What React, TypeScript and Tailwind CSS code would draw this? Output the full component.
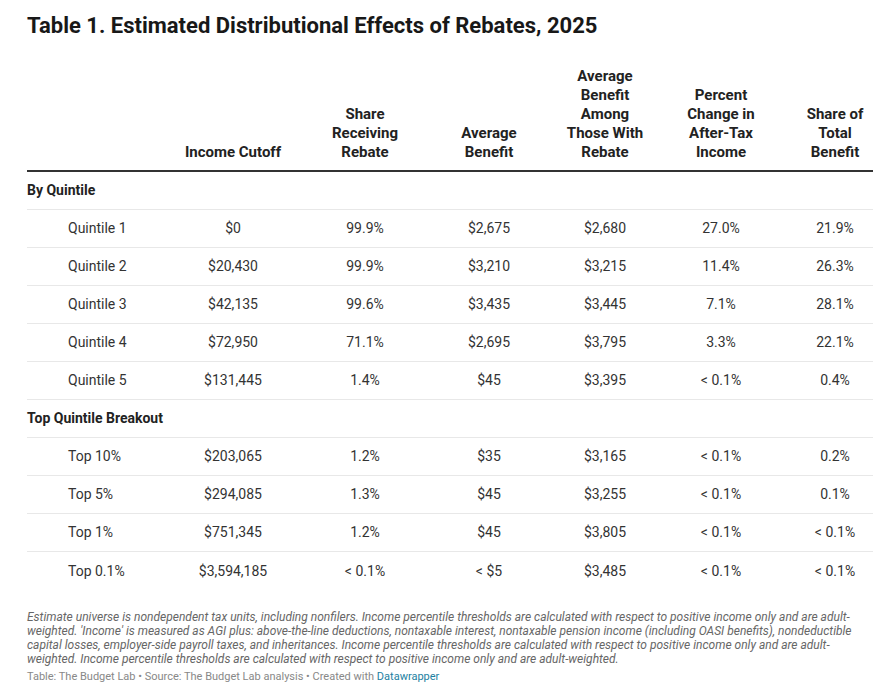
import React from 'react';

type Row = { label: string; cells: string[] };

const quintiles: Row[] = [
  { label: 'Quintile 1', cells: ['$0', '99.9%', '$2,675', '$2,680', '27.0%', '21.9%'] },
  { label: 'Quintile 2', cells: ['$20,430', '99.9%', '$3,210', '$3,215', '11.4%', '26.3%'] },
  { label: 'Quintile 3', cells: ['$42,135', '99.6%', '$3,435', '$3,445', '7.1%', '28.1%'] },
  { label: 'Quintile 4', cells: ['$72,950', '71.1%', '$2,695', '$3,795', '3.3%', '22.1%'] },
  { label: 'Quintile 5', cells: ['$131,445', '1.4%', '$45', '$3,395', '< 0.1%', '0.4%'] },
];

const topBreakout: Row[] = [
  { label: 'Top 10%', cells: ['$203,065', '1.2%', '$35', '$3,165', '< 0.1%', '0.2%'] },
  { label: 'Top 5%', cells: ['$294,085', '1.3%', '$45', '$3,255', '< 0.1%', '0.1%'] },
  { label: 'Top 1%', cells: ['$751,345', '1.2%', '$45', '$3,805', '< 0.1%', '< 0.1%'] },
  { label: 'Top 0.1%', cells: ['$3,594,185', '< 0.1%', '< $5', '$3,485', '< 0.1%', '< 0.1%'] },
];

const headers: string[][] = [
  ['Income Cutoff'],
  ['Share', 'Receiving', 'Rebate'],
  ['Average', 'Benefit'],
  ['Average', 'Benefit', 'Among', 'Those With', 'Rebate'],
  ['Percent', 'Change in', 'After-Tax', 'Income'],
  ['Share of', 'Total', 'Benefit'],
];

const cols = 'grid grid-cols-[122px_168px_96px_152px_80px_152px_76px]';

const DataRow = ({ row, last }: { row: Row; last?: boolean }) => (
  <div className={`${cols} h-[38px] items-center ${last ? '' : 'border-b border-[#e8e8e8]'}`}>
    <div className="pl-[41px] whitespace-nowrap">{row.label}</div>
    {row.cells.map((c, i) => (
      <div key={i} className="text-center whitespace-nowrap">
        {c}
      </div>
    ))}
  </div>
);

const GroupRow = ({ title }: { title: string }) => (
  <div className="h-[38px] flex items-center border-b border-[#e8e8e8] font-bold text-[#222]">{title}</div>
);

export default function App() {
  return (
    <div className="w-[895px] h-[696px] bg-white px-[27px] pt-[12px] font-['Roboto',sans-serif] text-[#333] overflow-hidden">
      <h1 className="text-[22px] leading-[28px] font-bold text-[#181818]">
        Table 1. Estimated Distributional Effects of Rebates, 2025
      </h1>

      <div className="w-[846px] mt-[27px] text-[14px]">
        <div className={`${cols} items-end pb-[8px] border-b-2 border-[#333] font-bold text-[15px] text-[#222] leading-[19px]`}>
          <div />
          {headers.map((h, i) => (
            <div key={i} className="text-center">
              {h.map((line, j) => (
                <div key={j} className="whitespace-nowrap">{line}</div>
              ))}
            </div>
          ))}
        </div>

        <GroupRow title="By Quintile" />
        {quintiles.map((r) => (
          <DataRow key={r.label} row={r} />
        ))}
        <GroupRow title="Top Quintile Breakout" />
        {topBreakout.map((r, i) => (
          <DataRow key={r.label} row={r} last={i === topBreakout.length - 1} />
        ))}
      </div>

      <p className="mt-[20px] w-[841px] text-[12px] leading-[14px] italic text-[#666]">
        Estimate universe is nondependent tax units, including nonfilers. Income percentile thresholds are calculated with respect to positive income only and are adult-weighted. 'Income' is measured as AGI plus: above-the-line deductions, nontaxable interest, nontaxable pension income (including OASI benefits), nondeductible capital losses, employer-side payroll taxes, and inheritances. Income percentile thresholds are calculated with respect to positive income only and are adult-weighted. Income percentile thresholds are calculated with respect to positive income only and are adult-weighted.
      </p>
      <div className="mt-[4px] text-[11px] leading-[14px] text-[#888]">
        Table: The Budget Lab • Source: The Budget Lab analysis • Created with{' '}
        <span className="text-[#1d81a2]">Datawrapper</span>
      </div>
    </div>
  );
}
